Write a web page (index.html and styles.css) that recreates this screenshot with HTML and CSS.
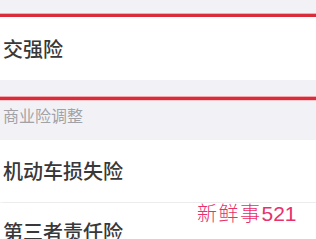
FILE: index.html
```html
<!DOCTYPE html>
<html lang="zh">
<head>
<meta charset="utf-8">
<link rel="stylesheet" href="styles.css">
</head>
<body>
<div class="page">
  <div class="sec-head sec-head-top"><span class="sec-title">交强险调整</span></div>
  <div class="red-line"></div>
  <div class="row row-first"><span class="row-text">交强险</span></div>
  <div class="gap"></div>
  <div class="red-line"></div>
  <div class="sec-head sec-head-mid"><span class="sec-title">商业险调整</span></div>
  <div class="row row-a"><span class="row-text">机动车损失险</span></div>
  <div class="sep"></div>
  <div class="row row-b"><span class="row-text">第三者责任险</span></div>
  <div class="watermark"><span class="wm-cn">新鲜事</span><span class="wm-num">521</span></div>
</div>
</body>
</html>
```

FILE: styles.css
```css
html, body {
  margin: 0;
  padding: 0;
  background: #f2f2f6;
}
.page {
  position: relative;
  width: 316px;
  height: 239px;
  overflow: hidden;
  display: flex;
  flex-direction: column;
  font-family: "Noto Sans CJK SC", "Noto Sans", sans-serif;
}
.sec-head {
  background: #f2f2f6;
  overflow: hidden;
  flex: none;
  padding-left: 3px;
}
.sec-title {
  display: block;
  font-size: 16px;
  line-height: 18px;
  color: #a2a2a6;
}
.sec-head-top {
  height: 13px;
}
.sec-head-top .sec-title {
  margin-top: -19px;
}
.sec-head-mid {
  height: 39px;
}
.sec-head-mid .sec-title {
  margin-top: 5px;
}
.red-line {
  flex: none;
  height: 3px;
  background: #d92b3a;
  border-top: 1px solid #f3a9b0;
  border-bottom: 1px solid #f7c9cd;
}
.row {
  background: #fff;
  flex: none;
  padding-left: 3px;
  display: flex;
  align-items: center;
}
.row-text {
  font-size: 20px;
  line-height: 22px;
  font-weight: 500;
  color: #38383a;
}
.row-first {
  height: 63px;
  margin-top: -1px;
}
.gap {
  height: 16px;
  flex: none;
}
.row-a {
  height: 62px;
}
.sep {
  flex: none;
  height: 1px;
  background: #ececee;
  margin-left: 3px;
}
.row-b {
  height: 40px;
  align-items: flex-start;
  padding-top: 18px;
}
.watermark {
  position: absolute;
  left: 197px;
  top: 198px;
  color: #e8306a;
  white-space: nowrap;
}
.wm-cn {
  font-family: "Noto Sans CJK SC", serif;
  font-weight: 300;
  font-size: 20px;
  letter-spacing: 1.5px;
}
.wm-num {
  font-family: "Liberation Sans", sans-serif;
  font-size: 21px;
}
```
